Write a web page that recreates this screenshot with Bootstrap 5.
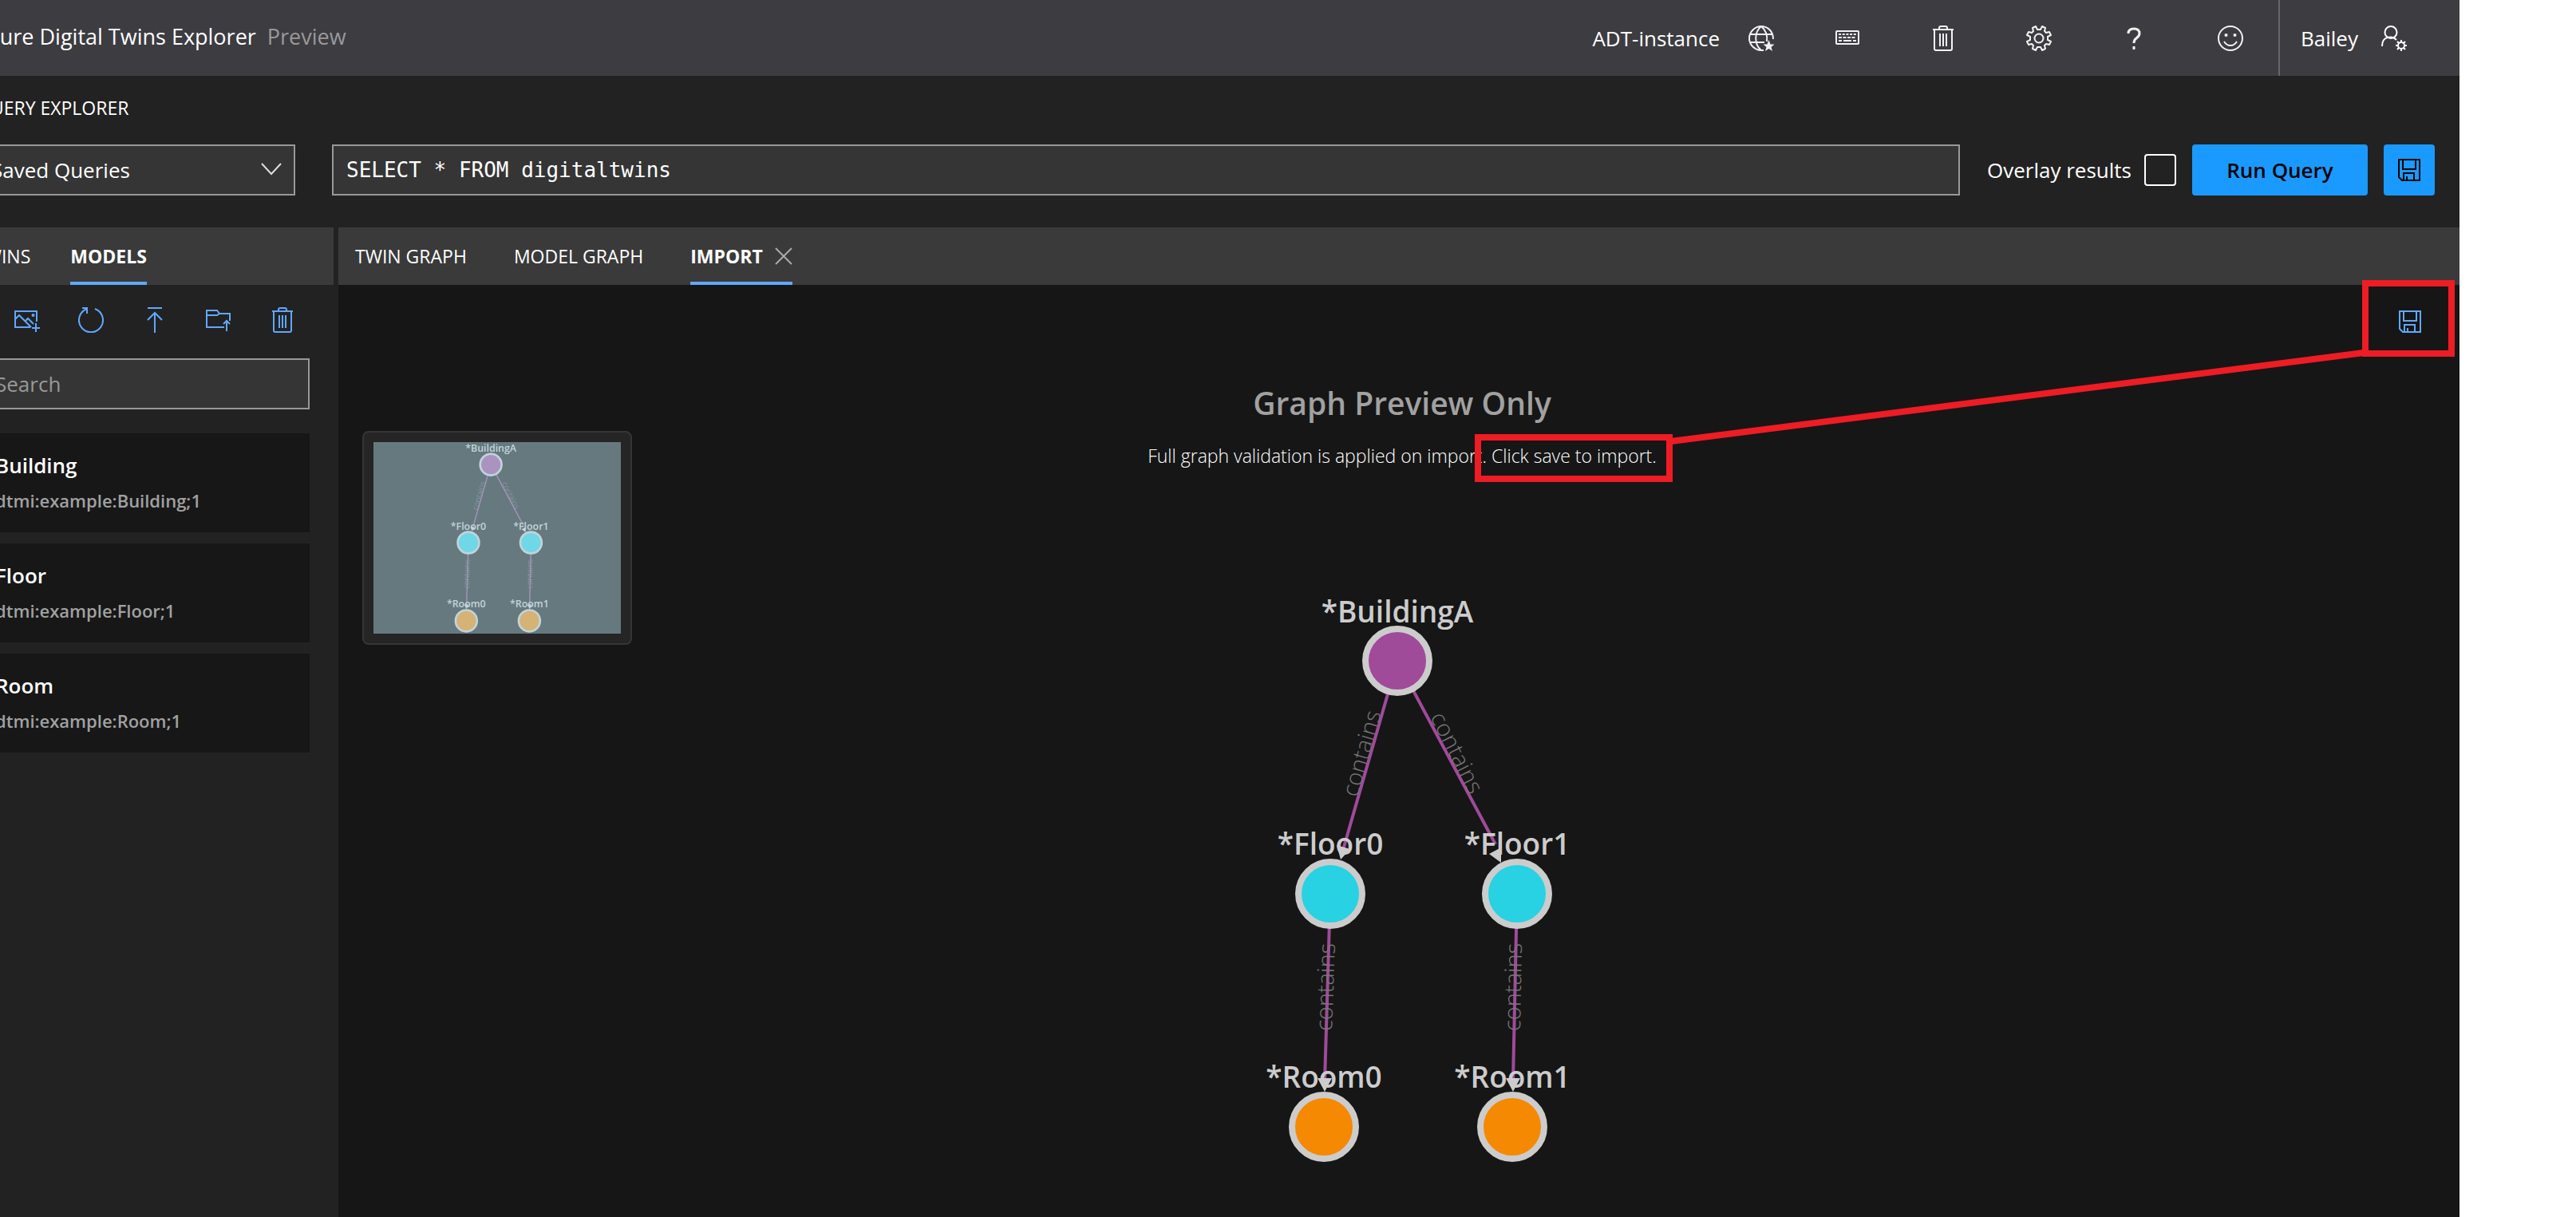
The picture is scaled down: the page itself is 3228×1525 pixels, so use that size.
<!DOCTYPE html>
<html lang="en">
<head>
<meta charset="utf-8">
<meta name="viewport" content="width=device-width, initial-scale=1">
<title>Azure Digital Twins Explorer</title>
<link rel="stylesheet" href="https://cdn.jsdelivr.net/npm/bootstrap@5.3.0/dist/css/bootstrap.min.css">
<style>
  body { font-family: "Open Sans", "Noto Sans", sans-serif; font-size: 26px; line-height: 36px; background: #fff; color: #fff; }
  .page { padding-right: 146px; overflow: hidden; }
  .app-shell { margin-left: -40px; background: #222; }
  svg.ico { width: 32px; height: 32px; fill: none; stroke: currentColor; stroke-width: 2; display: block; }

  .top-bar { height: 95px; background: #3d3c41; padding-left: 10px; }
  .brand { font-size: 27px; color: #fff; text-decoration: none; gap: 14px; padding-bottom: 3px; }
  .brand span { color: #999; }
  .top-btn { width: 120px; height: 94px; background: none; border: 0; color: #f3f2f1; display: flex; align-items: center; justify-content: center; padding: 0; }
  .top-btn.narrow { width: 96px; }
  .user-btn { width: 227px; height: 95px; background: none; border: 0; border-left: 2px solid #666; color: #fff; padding: 0 66px 0 26px; }

  .query-area { padding: 24px 31px 40px 10px; }
  .caps { font-size: 23px; line-height: 32px; font-weight: 400; }
  .query-row { margin-top: 30px; gap: 20px; }
  .field { height: 64px; border: 2px solid #989898; border-radius: 0; background-color: #353535; color: #fff; font-size: 26px; }
  .field:focus { background-color: #353535; color: #fff; }
  .field::placeholder { color: #999; opacity: 1; }
  .saved { width: 400px; padding: 0 60px 0 17px; margin-right: 26px; background-position: right 14px center; background-size: 28px 28px;
    background-image: url("data:image/svg+xml,%3csvg xmlns='http://www.w3.org/2000/svg' viewBox='0 0 28 28'%3e%3cpath fill='none' stroke='%23ddd' stroke-width='2' d='M2 6l12 13 12-13'/%3e%3c/svg%3e"); }
  .query-input { font-family: "DejaVu Sans Mono", monospace; padding: 0 16px; margin-right: 14px; }
  .overlay-check { gap: 16px; }
  .overlay-check .form-check-input { width: 40px; height: 40px; border: 2px solid #fff; border-radius: 4px; background-color: transparent; }
  .btn-run { width: 220px; height: 64px; background: #1a9aff; border: 0; border-radius: 4px; color: #000; font-size: 26px; font-weight: 600; }
  .btn-save { width: 64px; height: 64px; background: #1a9aff; border: 0; border-radius: 4px; color: #000; padding: 0; }

  .side-panel { width: 458px; }
  .main-panel { margin-left: 6px; background: #161616; }
  .tab-strip { height: 72px; background: #3a3a3a; gap: 50px; font-size: 23px; }
  .tab-strip .nav-link { color: #fff; padding: 4px 0 0; border-bottom: 4px solid transparent; display: flex; align-items: center; }
  .tab-strip .nav-link.active { font-weight: 700; border-color: #60a8ff; }
  .side-panel .tab-strip { padding-left: 8px; }
  .main-panel .tab-strip { padding-left: 21px; gap: 59px; }
  .close-tab { width: 22px; height: 22px; margin-left: 15px; }

  .tool-row { height: 92px; gap: 48px; padding: 0 0 4px 58px; }
  .tool-btn { background: none; border: 0; padding: 0; color: #60a8ff; }
  .side-body { padding: 0 30px 0 10px; }
  .search { padding: 0 22px; }
  .models { margin-top: 30px; gap: 14px; }
  .model { background: #171717; height: 124px; padding: 22px 24px; border: 0; border-radius: 0; }
  .model h3 { font-size: 26px; line-height: 36px; font-weight: 600; margin: 0 0 10px; color: #fff; }
  .model p { font-size: 22px; line-height: 32px; font-weight: 600; margin: 0; color: #a1a1a1; }

  .graph-tools { padding: 14px 30px 0; }
  .graph-tools .tool-btn { width: 64px; height: 64px; }
  .preview-note { margin-top: 46px; padding-left: 8px; }
  .preview-note h2 { font-size: 39px; line-height: 48px; font-weight: 600; color: #a1a1a1; margin: 0 0 26px; }
  .preview-note p { font-size: 23px; line-height: 32px; font-weight: 300; margin: 0; }
  .graph { width: 500px; height: 780px; margin-top: 133px; display: block; overflow: visible; }
  .graph text { font-family: "Open Sans", "Noto Sans", sans-serif; }
  .minimap { top: 255px; left: 30px; width: 338px; height: 268px; border: 2px solid #353535; border-radius: 8px; background: #252525; padding: 12px; }
  .minimap svg { width: 100%; height: 100%; display: block; background: #161616; }
  .callout-layer { top: 60px; right: 0; width: 1240px; height: 270px; pointer-events: none; }
</style>
</head>
<body>
<svg width="0" height="0" class="position-absolute" aria-hidden="true">
  <symbol id="i-save" viewBox="0 0 32 32"><path d="M3 3h26v26H7l-4-4zM8 3v12h16V3M9 29v-9h13v9M13 29v-5"/></symbol>
  <symbol id="i-trash" viewBox="0 0 32 32"><path d="M3 5h26M11 5V3q0-2 2-2h6q2 0 2 2v2M5 5v24q0 2 2 2h18q2 0 2-2V5M12 10v16M16 10v16M20 10v16"/></symbol>
</svg>
<div class="page">
<div class="app-shell min-vh-100 d-flex flex-column">

  <header class="top-bar d-flex align-items-center justify-content-between">
    <a href="#" class="brand d-flex">Azure Digital Twins Explorer <span>Preview</span></a>
    <div class="d-flex align-items-center">
      <span class="me-1">ADT-instance</span>
      <button class="top-btn narrow" type="button" aria-label="Instance">
        <svg class="ico" viewBox="0 0 32 32"><path d="M31 17C31 7 24 1 16 1S1 8 1 16s7 15 15 15h3M2 11h28M2 21h18M16 1C7 8 7 24 16 31M16 1c6 5 8 12 7 19"/><path d="M25.500 18l2 5.500h5l-4 3.500 1.500 5-4.500-3-4.500 3 1.500-5-4-3.500h5z" fill="currentColor" stroke="none"/></svg>
      </button>
      <button class="top-btn" type="button" aria-label="Keyboard shortcuts">
        <svg class="ico" viewBox="0 0 32 32"><rect x="2" y="7" width="28" height="16" rx="1"/><path d="M5 11h22" stroke-dasharray="3 1.700"/><path d="M5 15h22" stroke-dasharray="4 1.500"/><path d="M5 19h4M11 19h10M23 19h4"/></svg>
      </button>
      <button class="top-btn" type="button" aria-label="Delete"><svg class="ico"><use href="#i-trash"/></svg></button>
      <button class="top-btn" type="button" aria-label="Settings">
        <svg class="ico" viewBox="0 0 32 32"><circle cx="16" cy="16" r="5.500"/><path d="M18 5l2-4 4 2-1 4 2 2 4-1 2 4-4 2v4l4 2-2 4-4-1-2 2 1 4-4 2-2-4h-4l-2 4-4-2 1-4-2-2-4 1-2-4 4-2v-4l-4-2 2-4 4 1 2-2-1-4 4-2 2 4z" stroke-linejoin="round"/></svg>
      </button>
      <button class="top-btn" type="button" aria-label="Help">
        <svg class="ico" viewBox="0 0 32 32"><path d="M8 10q0-6 7-6t7 6q0 3-4 6-3 2-3 6" stroke-width="3"/><path d="M13.500 26h3v4h-3z" fill="currentColor" stroke="none"/></svg>
      </button>
      <button class="top-btn" type="button" aria-label="Feedback">
        <svg class="ico" viewBox="0 0 32 32"><circle cx="16" cy="16" r="15"/><path d="M8 20q3 5 8 5t8-5"/><circle cx="10.500" cy="12" r="2" fill="currentColor" stroke="none"/><circle cx="21.500" cy="12" r="2" fill="currentColor" stroke="none"/></svg>
      </button>
      <button class="user-btn d-flex align-items-center justify-content-between" type="button">Bailey
        <svg class="ico" viewBox="0 0 32 32"><circle cx="12" cy="8.500" r="7.500"/><path d="M1 26C1 12 14 13 19 18"/><circle cx="25" cy="25" r="4"/><path d="M25 18v3M25 29v3M18 25h3M29 25h3M20 20l2 2M28 28l2 2M30 20l-2 2M22 28l-2 2"/></svg>
      </button>
    </div>
  </header>

  <section class="query-area">
    <h1 class="caps m-0">QUERY EXPLORER</h1>
    <form class="query-row d-flex align-items-center">
      <select class="form-select field saved flex-shrink-0" aria-label="Saved Queries"><option>Saved Queries</option></select>
      <input class="form-control field query-input flex-grow-1" type="text" aria-label="Query" value="SELECT * FROM digitaltwins">
      <div class="overlay-check d-flex align-items-center flex-shrink-0">
        <label for="overlay">Overlay results</label>
        <input class="form-check-input m-0" type="checkbox" id="overlay">
      </div>
      <button class="btn btn-run flex-shrink-0" type="button">Run Query</button>
      <button class="btn btn-save flex-shrink-0" type="button" aria-label="Save query"><svg class="ico mx-auto"><use href="#i-save"/></svg></button>
    </form>
  </section>

  <div class="d-flex flex-grow-1">
    <aside class="side-panel flex-shrink-0">
      <nav class="nav tab-strip flex-nowrap">
        <a class="nav-link" href="#">TWINS</a>
        <a class="nav-link active" href="#">MODELS</a>
      </nav>
      <div class="tool-row d-flex align-items-center">
        <button class="tool-btn" type="button" aria-label="Upload model images"><svg class="ico" viewBox="0 0 32 32"><path d="M20 25H1V5h27v13M1 15l5-5 15 15M13 18l4-4 7 7M27 20v11M22 26h10"/><circle cx="23.500" cy="10" r="1" /></svg></button>
        <button class="tool-btn" type="button" aria-label="Refresh"><svg class="ico" viewBox="0 0 32 32"><path d="M5 1h6v7M11 2A15 15 0 1 0 21 2"/></svg></button>
        <button class="tool-btn" type="button" aria-label="Upload model"><svg class="ico" viewBox="0 0 32 32"><path d="M7 1h18M16 32V7M7 16l9-9 9 9"/></svg></button>
        <button class="tool-btn" type="button" aria-label="Upload folder"><svg class="ico" viewBox="0 0 32 32"><path d="M23 25H1V4h13l3 4h13v9M1 10h13l3-2M26 30V17M22 21l4-4 4 4"/></svg></button>
        <button class="tool-btn" type="button" aria-label="Delete models"><svg class="ico"><use href="#i-trash"/></svg></button>
      </div>
      <div class="side-body">
        <input class="form-control field search" type="search" placeholder="Search" aria-label="Search models">
        <div class="models d-flex flex-column">
          <article class="card model"><h3>Building</h3><p>dtmi:example:Building;1</p></article>
          <article class="card model"><h3>Floor</h3><p>dtmi:example:Floor;1</p></article>
          <article class="card model"><h3>Room</h3><p>dtmi:example:Room;1</p></article>
        </div>
      </div>
    </aside>

    <main class="main-panel flex-grow-1 position-relative">
      <nav class="nav tab-strip flex-nowrap">
        <a class="nav-link" href="#">TWIN GRAPH</a>
        <a class="nav-link" href="#">MODEL GRAPH</a>
        <a class="nav-link active" href="#">IMPORT
          <svg class="close-tab" viewBox="0 0 22 22" fill="none" stroke="#aaa" stroke-width="2"><path d="M1 1l20 20M21 1L1 21"/></svg></a>
      </nav>
      <div class="graph-tools d-flex justify-content-end">
        <button class="tool-btn" type="button" aria-label="Save"><svg class="ico mx-auto"><use href="#i-save"/></svg></button>
      </div>
      <div class="preview-note text-center">
        <h2>Graph Preview Only</h2>
        <p>Full graph validation is applied on import. Click save to import.</p>
      </div>

      <svg class="graph mx-auto" viewBox="3 0 500 780" role="img" aria-label="Twin graph">
        <g id="twin-graph">
          <g stroke="#a04a9a" stroke-width="4">
            <path d="M251 108L183 345M251 108L374 338M167 400L160 635M401 400L396 635"/>
          </g>
          <g fill="#ccc">
            <path d="M180 357l-5-18 17 5zM381 361l-15-11 15-8zM160 648l-9-17h18zM396 648l-9-17h18z"/>
          </g>
          <g stroke="#ccc" stroke-width="8">
            <circle cx="251" cy="108" r="40" fill="#a04a9a"/>
            <circle cx="167" cy="400" r="40" fill="#28d2e2"/>
            <circle cx="401" cy="400" r="40" fill="#28d2e2"/>
            <circle cx="159" cy="692" r="40" fill="#f58902"/>
            <circle cx="395" cy="692" r="40" fill="#f58902"/>
          </g>
          <g fill="#ccc" font-size="37" font-weight="600" text-anchor="middle">
            <text x="251" y="60">*BuildingA</text>
            <text x="167" y="351">*Floor0</text>
            <text x="401" y="351">*Floor1</text>
            <text x="159" y="643">*Room0</text>
            <text x="395" y="643">*Room1</text>
          </g>
          <g fill="#777" font-size="29" font-weight="300" text-anchor="middle">
            <text transform="translate(213 226) rotate(-74)" y="3">contains</text>
            <text transform="translate(314 229) rotate(63)" y="-3">contains</text>
            <text transform="translate(163 517) rotate(-88)" y="8">contains</text>
            <text transform="translate(398 517) rotate(-89)" y="8">contains</text>
          </g>
        </g>
      </svg>

      <div class="minimap position-absolute">
        <svg viewBox="-188 24 925 716" aria-hidden="true">
          <use href="#twin-graph"/>
          <rect x="-200" y="0" width="960" height="760" fill="#b6dce8" opacity=".5"/>
        </svg>
      </div>

      <svg class="callout-layer position-absolute" viewBox="0 0 1240 270" fill="none" stroke="#ee1c24" stroke-width="8" aria-hidden="true">
        <rect x="10" y="203" width="240" height="52"/>
        <rect x="1122" y="10" width="108" height="88"/>
        <path d="M252 208L1120 97"/>
      </svg>
    </main>
  </div>
</div>
</div>
<script src="https://cdn.jsdelivr.net/npm/bootstrap@5.3.0/dist/js/bootstrap.bundle.min.js"></script>
</body>
</html>
